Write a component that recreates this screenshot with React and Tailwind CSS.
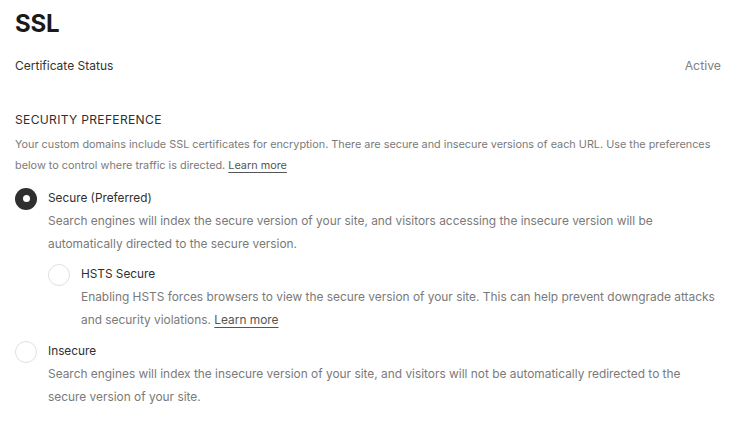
import React from "react";

function Radio({ checked }) {
  if (checked) {
    return (
      <span className="flex h-[22px] w-[22px] shrink-0 items-center justify-center rounded-full bg-[#2f2f2f]">
        <span className="h-[7px] w-[7px] rounded-full bg-white" />
      </span>
    );
  }
  return <span className="block h-[22px] w-[22px] shrink-0 rounded-full border-[1.5px] border-[#e0e0e0] bg-white" />;
}

function Option({ checked, title, children, className = "" }) {
  return (
    <div className={"flex gap-[11px] " + className}>
      <div className="pt-[1px]">
        <Radio checked={checked} />
      </div>
      <div className="flex flex-col">
        <div className="text-[11.8px] leading-[22px] text-[#2f2f2f]">{title}</div>
        <div className="text-[11.9px] leading-[23px] text-[#7a7a7a]">{children}</div>
      </div>
    </div>
  );
}

export default function App() {
  return (
    <div
      className="min-h-[444px] w-[747px] bg-white px-[15px] pt-[8px] antialiased"
      style={{ fontFamily: "Inter, 'Noto Sans', sans-serif" }}
    >
      <h1 className="text-[24px] font-bold leading-[32px] tracking-[-0.2px] text-[#1a1a1a]">SSL</h1>
      <div className="mt-[17px] flex items-center justify-between pr-[11px]">
        <span className="text-[12px] text-[#333]">Certificate Status</span>
        <span className="text-[12.3px] text-[#808080]">Active</span>
      </div>
      <div className="mt-[36px] text-[12.1px] uppercase tracking-[0.3px] text-[#2f2f2f]">Security Preference</div>
      <p className="mt-[4px] text-[10.85px] leading-[21px] text-[#7a7a7a]">
        Your custom domains include SSL certificates for encryption. There are secure and insecure versions of each URL. Use the preferences
        <br />
        below to control where traffic is directed.{" "}
        <a className="text-[#555] underline decoration-[#555] underline-offset-[3px]">Learn more</a>
      </p>
      <Option checked title="Secure (Preferred)" className="mt-[11px]">
        Search engines will index the secure version of your site, and visitors accessing the insecure version will be
        <br />
        automatically directed to the secure version.
      </Option>
      <Option title="HSTS Secure" className="mt-[8px] ml-[33px]">
        Enabling HSTS forces browsers to view the secure version of your site. This can help prevent downgrade attacks
        <br />
        and security violations.{" "}
        <a className="text-[#555] underline decoration-[#555] underline-offset-[3px]">Learn more</a>
      </Option>
      <Option title="Insecure" className="mt-[9px]">
        Search engines will index the insecure version of your site, and visitors will not be automatically redirected to the
        <br />
        secure version of your site.
      </Option>
    </div>
  );
}
